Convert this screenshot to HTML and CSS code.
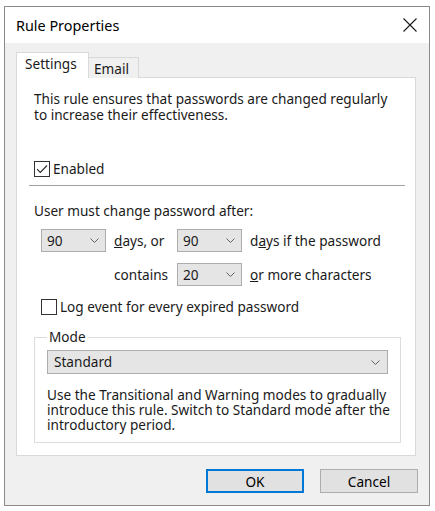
FILE: index.html
```html
<!DOCTYPE html>
<html lang="en">
<head>
<meta charset="utf-8">
<title>Rule Properties</title>
<link rel="stylesheet" href="styles.css">
</head>
<body>
<div class="window">
  <div class="titlebar">
    <span class="title">Rule Properties</span>
    <svg class="close" width="14" height="14" viewBox="0 0 14 14"><path d="M0.5 0.5 L13.5 13.5 M13.5 0.5 L0.5 13.5" stroke="#1a1a1a" stroke-width="1.1" fill="none"/></svg>
  </div>
  <div class="client">
    <div class="tabs">
      <div class="tab active">Settings</div>
      <div class="tab">Email</div>
    </div>
    <div class="panel">
      <p class="intro">This rule ensures that passwords are changed regularly to increase their effectiveness.</p>
      <div class="check enabled">
        <span class="box"><svg width="14" height="14" viewBox="0 0 14 14"><path d="M2 7.2 L5.3 10.5 L12 3.5" stroke="#2b2b2b" stroke-width="1.1" fill="none"/></svg></span>
        <span>Enabled</span>
      </div>
      <div class="sep"></div>
      <div class="label">User must change password after:</div>
      <div class="grid">
        <div class="combo small"><span>90</span><svg class="chev" width="9" height="5" viewBox="0 0 9 5"><path d="M0.5 0.5 L4.5 4.5 L8.5 0.5" stroke="#606060" fill="none"/></svg></div>
        <div class="txt"><u>d</u>ays, or</div>
        <div class="combo small"><span>90</span><svg class="chev" width="9" height="5" viewBox="0 0 9 5"><path d="M0.5 0.5 L4.5 4.5 L8.5 0.5" stroke="#606060" fill="none"/></svg></div>
        <div class="txt">d<u>a</u>ys if the password</div>
        <div class="txt col2">contains</div>
        <div class="combo small"><span>20</span><svg class="chev" width="9" height="5" viewBox="0 0 9 5"><path d="M0.5 0.5 L4.5 4.5 L8.5 0.5" stroke="#606060" fill="none"/></svg></div>
        <div class="txt"><u>o</u>r more characters</div>
      </div>
      <div class="check log">
        <span class="box"></span>
        <span>Log event for every expired password</span>
      </div>
      <fieldset class="group">
        <legend>Mode</legend>
        <div class="combo wide"><span>Standard</span><svg class="chev" width="9" height="5" viewBox="0 0 9 5"><path d="M0.5 0.5 L4.5 4.5 L8.5 0.5" stroke="#606060" fill="none"/></svg></div>
        <p class="desc">Use the Transitional and Warning modes to gradually introduce this rule. Switch to Standard mode after the introductory period.</p>
      </fieldset>
    </div>
    <div class="buttons">
      <div class="btn default">OK</div>
      <div class="btn">Cancel</div>
    </div>
  </div>
</div>
</body>
</html>
```

FILE: styles.css
```css
* { box-sizing: border-box; }
html, body { margin: 0; padding: 0; background: #ffffff; }
body {
  font-family: "Noto Sans", "Open Sans", sans-serif;
  font-size: 13.6px;
  color: #1a1a1a;
}
.window {
  margin: 6px 0 0 4px;
  width: 426px;
  height: 500px;
  border: 1px solid #8a8a8a;
  display: flex;
  flex-direction: column;
  background: #f0f0f0;
}
.titlebar {
  height: 36px;
  background: #ffffff;
  display: flex;
  align-items: center;
  justify-content: space-between;
  padding: 0 12px 0 11px;
}
.title { font-size: 14.4px; color: #000; }
.close { display: block; }
.client {
  flex: 1;
  display: flex;
  flex-direction: column;
  padding: 9px 13px 0 11px;
}
.tabs {
  display: flex;
  align-items: flex-end;
  height: 26px;
  margin-bottom: -1px;
  position: relative;
  z-index: 1;
}
.tab {
  height: 21px;
  width: 51px;
  border: 1px solid #d9d9d9;
  border-bottom: none;
  background: #f0f0f0;
  padding: 2px 0 0 5px;
  line-height: 17px;
}
.tab.active {
  height: 26px;
  width: 73px;
  background: #ffffff;
  padding: 2px 0 0 8px;
  margin-right: -1px;
  position: relative;
  z-index: 2;
}
.panel {
  height: 379px;
  background: #ffffff;
  border: 1px solid #d9d9d9;
  padding: 0 10px 0 12px;
}
.intro {
  margin: 13px 0 0 5px;
  max-width: 362px;
  line-height: 16px;
}
.check {
  display: flex;
  align-items: center;
  gap: 3px;
  height: 16px;
  line-height: 16px;
}
.box {
  width: 16px;
  height: 16px;
  border: 1px solid #333333;
  background: #ffffff;
  display: flex;
  align-items: center;
  justify-content: center;
}
.box svg { display: block; }
.check.enabled { margin: 38px 0 0 5px; }
.sep {
  margin-top: 8px;
  height: 2px;
  border-top: 1px solid #a0a0a0;
  border-bottom: 1px solid #ffffff;
}
.label {
  margin: 16px 0 0 5px;
  line-height: 16px;
}
.grid {
  margin: 10px 0 0 12px;
  display: grid;
  grid-template-columns: 65px 55px 65px auto;
  column-gap: 8px;
  row-gap: 11px;
  align-items: center;
}
.col2 { grid-column: 2; }
.txt { line-height: 16px; white-space: nowrap; }
.combo {
  height: 23px;
  background: #e5e5e5;
  border: 1px solid #adadad;
  display: flex;
  align-items: center;
  justify-content: space-between;
  padding: 0 6px 0 5px;
  line-height: 16px;
}
.chev { display: block; }
.check.log { margin: 13px 0 0 12px; }
.group {
  margin: 14px 0 0 5px;
  width: 367px;
  border: 1px solid #dcdcdc;
  padding: 1px 4px 10px 12px;
  min-inline-size: 0;
}
.group legend {
  padding: 0 2px;
  line-height: 16px;
}
.combo.wide {
  margin-top: 4px;
  margin-right: 8px;
  height: 24px;
  padding: 0 7px 0 6px;
}
.desc {
  margin: 13px 0 0 0;
  line-height: 15px;
}
.buttons {
  display: flex;
  justify-content: flex-end;
  gap: 16px;
  margin-top: 13px;
  margin-right: -2px;
}
.btn {
  width: 98px;
  height: 24px;
  background: #e1e1e1;
  border: 1px solid #adadad;
  display: flex;
  align-items: center;
  justify-content: center;
  color: #000;
}
.btn.default {
  border: 2px solid #0078d7;
}
```
